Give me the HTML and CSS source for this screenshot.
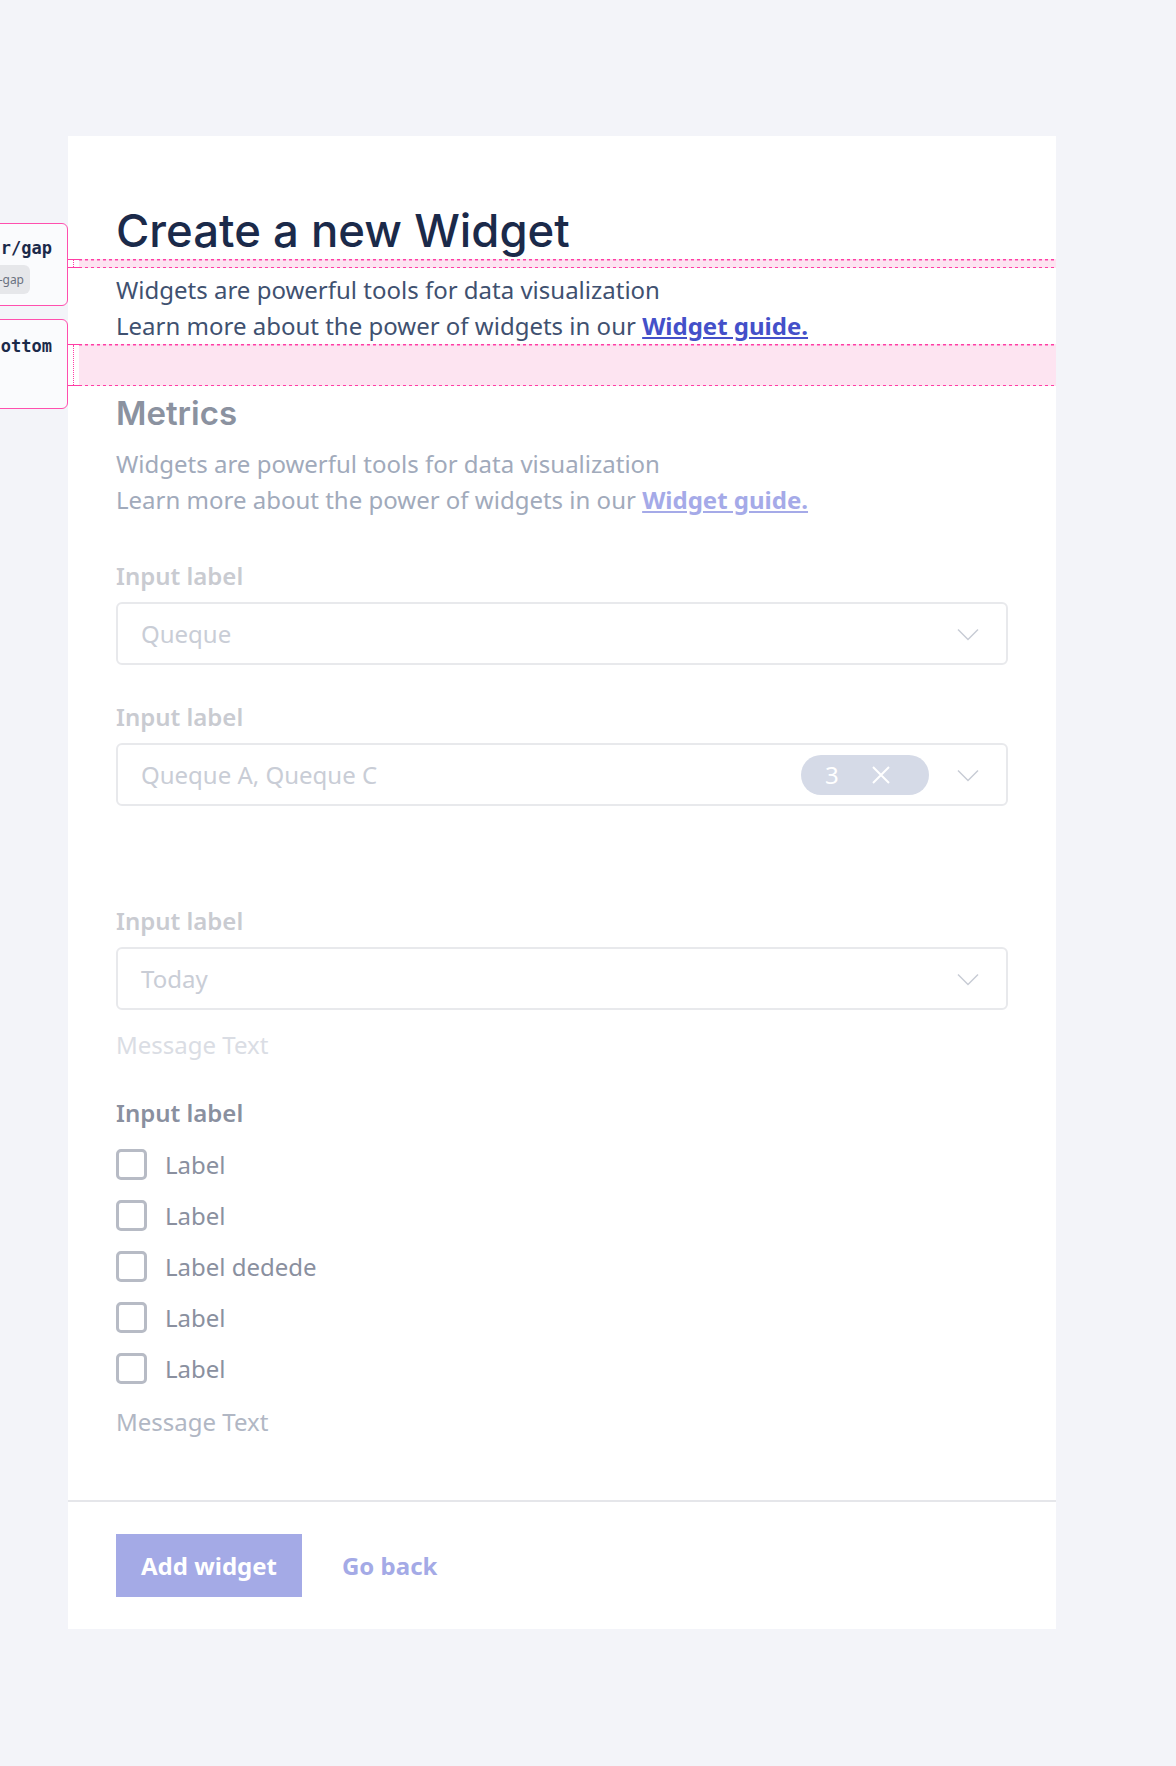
FILE: index.html
```html
<!DOCTYPE html>
<html lang="en">
<head>
  <meta charset="UTF-8" />
  <meta name="viewport" content="width=device-width, initial-scale=1.0">
  <title>Create a new Widget</title>
  <link rel="stylesheet" href="styles.css">
</head>
<body>
  <div class="page">
    <!-- spacing annotations, sitting over the left edge of the card -->
    <div class="spec-note spec-gap">
      <span class="spec-name">r/gap</span>
      <span class="spec-token">-gap</span>
    </div>
    <div class="spec-note spec-bottom">
      <span class="spec-name">ottom</span>
    </div>

    <div class="card">
      <div class="card-body">
        <h1 class="title">Create a new Widget</h1>
        <div class="spacer spacer-sm"><span class="spacer-tick"></span><span class="spacer-fill"></span></div>
        <p class="intro">Widgets are powerful tools for data visualization<br>Learn more about the power of widgets in our <a href="#">Widget guide.</a></p>
        <div class="spacer spacer-lg"><span class="spacer-tick"></span><span class="spacer-fill"></span></div>

        <h2 class="section-title">Metrics</h2>
        <p class="intro muted">Widgets are powerful tools for data visualization<br>Learn more about the power of widgets in our <a href="#">Widget guide.</a></p>

        <div class="field field-first disabled">
          <div class="field-label">Input label</div>
          <div class="select">
            <span class="select-value">Queque</span>
            <svg class="chevron" viewBox="0 0 24 24"><path d="M2 7.5l10 10 10-10" /></svg>
          </div>
        </div>

        <div class="field disabled">
          <div class="field-label">Input label</div>
          <div class="select">
            <span class="select-value">Queque A, Queque C</span>
            <span class="count-pill">3
              <svg class="pill-close" viewBox="0 0 20 20"><path d="M2 2l16 16M18 2L2 18" /></svg>
            </span>
            <svg class="chevron" viewBox="0 0 24 24"><path d="M2 7.5l10 10 10-10" /></svg>
          </div>
        </div>

        <div class="field field-spaced disabled">
          <div class="field-label">Input label</div>
          <div class="select">
            <span class="select-value">Today</span>
            <svg class="chevron" viewBox="0 0 24 24"><path d="M2 7.5l10 10 10-10" /></svg>
          </div>
          <div class="field-message">Message Text</div>
        </div>

        <div class="field checks">
          <div class="field-label">Input label</div>
          <label class="check"><span class="check-box"></span>Label</label>
          <label class="check"><span class="check-box"></span>Label</label>
          <label class="check"><span class="check-box"></span>Label dedede</label>
          <label class="check"><span class="check-box"></span>Label</label>
          <label class="check"><span class="check-box"></span>Label</label>
          <div class="field-message">Message Text</div>
        </div>
      </div>

      <div class="card-footer">
        <button class="btn-primary">Add widget</button>
        <button class="btn-link">Go back</button>
      </div>
    </div>
  </div>
</body>
</html>
```

FILE: styles.css
```css
body {
  margin: 0;
  background-color: #f3f4f9;
  font-family: "Noto Sans", sans-serif;
  overflow-x: hidden;
}
.page {
  position: relative;
  padding: 136px 0 136px 68px;
}
.card {
  width: 988px;
  background-color: #fff;
}
.card-body {
  padding: 67px 48px 60px;
}
.title {
  margin: 0;
  font-family: Inter, sans-serif;
  font-weight: 500;
  font-size: 45.5px;
  line-height: 56px;
  color: #1b2a4a;
}
.section-title {
  margin: 5px 0 0;
  font-family: Inter, sans-serif;
  font-weight: 600;
  font-size: 33px;
  line-height: 44px;
  color: #8b92a0;
}
.intro {
  margin: 0;
  padding-top: 4px;
  font-size: 24px;
  line-height: 36px;
  color: #3f5170;
}
.intro a {
  color: #4450c9;
  font-weight: 700;
}
.intro.muted {
  margin-top: 11px;
  padding-top: 0;
  color: #a1aabb;
}
.intro.muted a {
  color: #a5aae8;
}

/* spacing overlay bands */
.spacer {
  display: flex;
  margin: 0 -48px;
}
.spacer-sm {
  height: 9px;
}
.spacer-lg {
  height: 42px;
}
.spacer-tick {
  position: relative;
  width: 11px;
  box-sizing: border-box;
  border-top: 1.5px solid #ff3ea5;
  border-bottom: 1.5px solid #ff3ea5;
}
.spacer-tick::after {
  content: "";
  position: absolute;
  left: 5px;
  top: 0;
  bottom: 0;
  border-left: 1.5px dotted #ff3ea5;
}
.spacer-fill {
  flex: 1;
  background:
    repeating-linear-gradient(90deg, #ff3ea5 0 3px, transparent 3px 6px) top / 100% 1.5px no-repeat,
    repeating-linear-gradient(90deg, #ff3ea5 0 3px, transparent 3px 6px) bottom / 100% 1.5px no-repeat,
    #fde4f1;
}

/* form fields */
.field {
  margin-top: 34px;
}
.field-first {
  margin-top: 40px;
}
.field-spaced {
  margin-top: 97px;
}
.field-label {
  margin-bottom: 8px;
  font-size: 24px;
  line-height: 36px;
  font-weight: 600;
  color: #8a909f;
}
.disabled .field-label {
  color: #c9cbd1;
}
.select {
  display: flex;
  align-items: center;
  height: 63px;
  box-sizing: border-box;
  padding: 0 26px 0 23px;
  border: 2px solid #e8e9ec;
  border-radius: 6px;
}
.select-value {
  flex: 1;
  font-size: 24px;
  color: #c9cdd6;
}
.chevron {
  width: 24px;
  height: 24px;
  fill: none;
  stroke: #c8ccd5;
  stroke-width: 1.5;
}
.count-pill {
  display: flex;
  align-items: center;
  gap: 32px;
  width: 128px;
  height: 40px;
  box-sizing: border-box;
  margin-right: 27px;
  padding-left: 24px;
  border-radius: 20px;
  background-color: #d5dae7;
  color: #fff;
  font-size: 24px;
}
.pill-close {
  width: 20px;
  height: 20px;
  fill: none;
  stroke: #fff;
  stroke-width: 2;
}
.field-message {
  margin-top: 17px;
  font-size: 24px;
  line-height: 36px;
  color: #dadde4;
}
.checks {
  margin-top: 32px;
}
.check {
  display: flex;
  align-items: center;
  gap: 18px;
  height: 51px;
  font-size: 24px;
  color: #8a909f;
}
.check-box {
  width: 31px;
  height: 31px;
  box-sizing: border-box;
  border: 3px solid #b7bbc5;
  border-radius: 5px;
}
.checks .field-message {
  margin-top: 10px;
  color: #b1b7c4;
}

/* footer */
.card-footer {
  display: flex;
  align-items: center;
  gap: 40px;
  padding: 32px 48px;
  border-top: 2px solid #e5e6ea;
}
.btn-primary {
  height: 63px;
  padding: 0 25px;
  border: none;
  background-color: #a4aae6;
  color: #fff;
  font-family: "Noto Sans", sans-serif;
  font-size: 24px;
  font-weight: 700;
}
.btn-link {
  padding: 0;
  border: none;
  background: none;
  color: #a4aae6;
  font-family: "Noto Sans", sans-serif;
  font-size: 24px;
  font-weight: 700;
}

/* annotation boxes */
.spec-note {
  position: absolute;
  right: calc(100% - 68px);
  display: flex;
  flex-direction: column;
  align-items: flex-end;
  width: 160px;
  box-sizing: border-box;
  padding: 14px 15px 0 0;
  border: 1.5px solid #ff4fae;
  border-radius: 6px;
  background-color: #fafbfd;
}
.spec-gap {
  top: 223px;
  height: 83px;
}
.spec-bottom {
  top: 319px;
  height: 90px;
  padding-top: 16px;
}
.spec-name {
  font-family: "DejaVu Sans Mono", monospace;
  font-weight: 700;
  font-size: 17px;
  line-height: 20px;
  color: #1b2a4a;
  white-space: nowrap;
}
.spec-token {
  margin-top: 7px;
  margin-right: 22px;
  padding: 6px 6px 6px 30px;
  border-radius: 6px;
  background-color: #e6e7ea;
  font-size: 12px;
  line-height: 17px;
  color: #6b7280;
  white-space: nowrap;
}
```
